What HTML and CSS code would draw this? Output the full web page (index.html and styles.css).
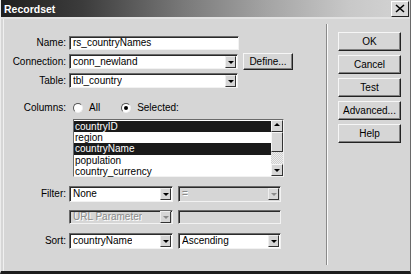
FILE: index.html
```html
<!doctype html>
<html>
<head>
	<meta charset='utf-8' />
	<title>Recordset</title>
	<link rel="stylesheet" href="styles.css">
</head>

<body>
	<div class='dialog'>
		<div class='titlebar'>
			<span class='title'>Recordset</span>
			<span class='close'><svg width='10' height='9' viewBox='0 0 10 9'><path d='M1 1L9 8M9 1L1 8' stroke='#000' stroke-width='1.6'/></svg></span>
		</div>
		<div class='body'>
			<div class='form'>
				<div class='row r-name'>
					<span class='lbl'>Name:</span>
					<div class='field w170'>rs_countryNames</div>
				</div>
				<div class='row'>
					<span class='lbl'>Connection:</span>
					<div class='select w169'><span>conn_newland</span><i class='arrow'></i></div>
					<div class='btn define'>Define...</div>
				</div>
				<div class='row'>
					<span class='lbl'>Table:</span>
					<div class='select w169'><span>tbl_country</span><i class='arrow'></i></div>
				</div>
				<div class='row r-cols'>
					<span class='lbl'>Columns:</span>
					<span class='radio'></span><span class='opt'>All</span>
					<span class='radio on'></span><span class='opt'>Selected:</span>
				</div>
				<div class='listbox'>
					<div class='items'>
						<div class='item sel'>countryID</div>
						<div class='item'>region</div>
						<div class='item sel'>countryName</div>
						<div class='item'>population</div>
						<div class='item'>country_currency</div>
					</div>
					<div class='scroll'>
						<i class='sbtn up'></i>
						<i class='thumb'></i>
						<i class='track'></i>
						<i class='sbtn down'></i>
					</div>
				</div>
				<div class='row r-filter'>
					<span class='lbl'>Filter:</span>
					<div class='select w104'><span>None</span><i class='arrow'></i></div>
					<div class='select w103 off'><span>=</span><i class='arrow'></i></div>
				</div>
				<div class='row r-url'>
					<span class='lbl'></span>
					<div class='select w104 off'><span>URL Parameter</span><i class='arrow'></i></div>
					<div class='field w103 off'></div>
				</div>
				<div class='row r-sort'>
					<span class='lbl'>Sort:</span>
					<div class='select w104'><span>countryName</span><i class='arrow'></i></div>
					<div class='select w103'><span>Ascending</span><i class='arrow'></i></div>
				</div>
			</div>
			<div class='sep'></div>
			<div class='buttons'>
				<div class='btn'>OK</div>
				<div class='btn'>Cancel</div>
				<div class='btn'>Test</div>
				<div class='btn'>Advanced...</div>
				<div class='btn'>Help</div>
			</div>
		</div>
	</div>
</body>
</html>
```

FILE: styles.css
```css
/*reset*/
body,div,span{margin:0;padding:0;}
body{background:#d6d6d6;}
/*window*/
.dialog{position:relative;width:411px;height:274px;box-sizing:border-box;background:#d6d6d6;border-left:1px solid #ececec;border-right:1px solid #6a6a6a;border-bottom:3px solid #1c1c1c;font-family:"Liberation Sans",Arial,sans-serif;font-size:10px;color:#000;overflow:hidden;}
.titlebar{display:flex;align-items:center;justify-content:space-between;height:17px;padding:0 1px 0 3px;background:linear-gradient(to right,#1f1f1f,#3c3c3c 20%,#7a7a7a 45%,#a4a4a4 65%,#c8c8c8 85%,#d4d4d4);border-bottom:2px solid #e2e2e2;}
.title{color:#fff;font-weight:bold;font-size:10.5px;}
.close{display:flex;align-items:center;justify-content:center;width:16px;height:14px;background:#d8d8d8;border:1px solid;border-color:#fff #222 #222 #fff;}
.body{display:flex;height:252px;border-bottom:1px solid #f4f4f4;margin:0 0 0 2px;border-left:1px solid #f0f0f0;}
/*form*/
.form{width:318px;padding-top:14px;}
.row{display:flex;align-items:center;height:19px;}
.lbl{width:62px;text-align:right;margin-right:3px;}
.field,.select{box-sizing:border-box;height:15px;background:#fff;border:1px solid;border-color:#6a6a6a #f2f2f2 #f2f2f2 #6a6a6a;box-shadow:inset 1px 1px 0 #2a2a2a;display:flex;align-items:center;padding-left:3px;white-space:nowrap;}
.select{padding-right:1px;justify-content:space-between;}
.select span{overflow:hidden;}
.select.off,.field.off{background:#d6d6d6;color:#8a8a8a;text-shadow:1px 1px 0 #fff;}
.arrow{flex:none;box-sizing:border-box;width:11px;height:12px;background:#d6d6d6;border:1px solid;border-color:#eee #333 #333 #eee;position:relative;}
.arrow::after{content:'';position:absolute;left:2px;top:4px;border:3px solid transparent;border-top:3px solid #000;border-bottom:0;}
.off .arrow::after{border-top-color:#8a8a8a;}
.w170{width:170px;}
.w169{width:169px;}
.w104{width:104px;}
.w103{width:103px;margin-left:5px;}
.r-name .field{height:14px;}
.btn{box-sizing:border-box;display:flex;align-items:center;justify-content:center;background:#d6d6d6;border:1px solid;border-color:#f6f6f6 #222 #222 #f6f6f6;box-shadow:inset -1px -1px 0 #808080;}
.define{width:50px;height:17px;margin-left:5px;}
.r-cols{margin-top:8px;}
.radio{box-sizing:border-box;width:10px;height:10px;border-radius:50%;background:#fff;border:1px solid;border-color:#555 #eee #eee #555;margin:0 6px 0 4px;position:relative;}
.radio.on::after{content:'';position:absolute;left:2px;top:2px;width:4px;height:4px;border-radius:50%;background:#000;}
.opt{margin-right:17px;}
/*list*/
.listbox{box-sizing:border-box;display:flex;width:211px;height:58px;margin:2px 0 0 69px;background:#fff;border:1px solid;border-color:#6a6a6a #f2f2f2 #f2f2f2 #6a6a6a;}
.items{flex:1;padding-top:1px;}
.item{height:11.2px;line-height:11px;padding-left:1px;white-space:nowrap;}
.item.sel{background:#1a1a1a;color:#fff;}
.scroll{display:flex;flex-direction:column;width:12px;background:repeating-conic-gradient(#eee 0 25%,#d0d0d0 0 50%) 0 0/2px 2px;}
.sbtn,.thumb{box-sizing:border-box;display:block;height:12px;background:#d6d6d6;border:1px solid;border-color:#f6f6f6 #333 #333 #f6f6f6;position:relative;}
.thumb{height:20px;}
.track{flex:1;display:block;}
.sbtn::after{content:'';position:absolute;left:2px;border:3px solid transparent;}
.up::after{top:2px;border-bottom:3px solid #000;border-top:0;}
.down::after{top:4px;border-top:3px solid #000;border-bottom:0;}
.r-filter{margin-top:7px;}
.r-filter .select,.r-sort .select{height:16px;}
.r-url{margin-top:4px;}
.r-url .select{height:14px;}
.r-url .field{height:14px;}
.r-sort{margin-top:5px;}
/*buttons*/
.sep{width:0;margin:5px 0 6px 4px;border-left:1px solid #8a8a8a;border-right:1px solid #fafafa;}
.buttons{display:flex;flex-direction:column;gap:4px;padding:13px 0 0 10px;}
.buttons .btn{width:63px;height:19px;}
```
